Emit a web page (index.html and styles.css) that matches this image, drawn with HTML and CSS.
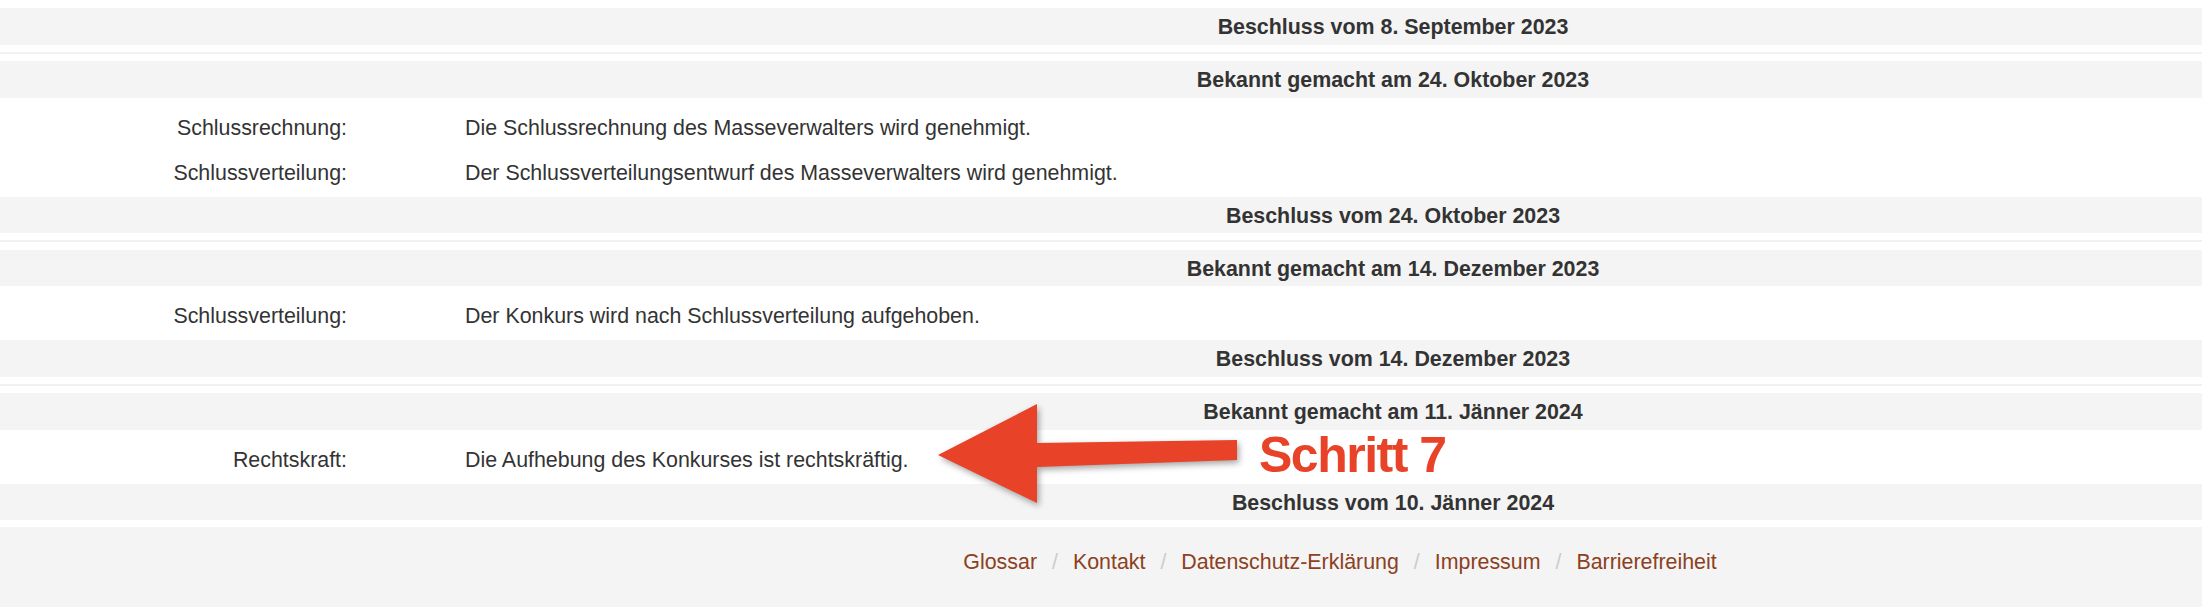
FILE: index.html
```html
<!DOCTYPE html>
<html lang="de">
<head>
    <meta charset="UTF-8">
    <meta name="viewport" content="width=device-width, initial-scale=1.0">
    <title>Ediktsdatei – Konkursverfahren</title>
    <link rel="stylesheet" href="styles.css">
</head>
<body>
    <div class="page">
        <div class="section">
            <div class="band">Beschluss vom 8. September 2023</div>
        </div>

        <div class="section">
            <div class="band">Bekannt gemacht am 24. Oktober 2023</div>
            <div class="rows">
                <div class="row">
                    <span class="label">Schlussrechnung:</span>
                    <span class="value">Die Schlussrechnung des Masseverwalters wird genehmigt.</span>
                </div>
                <div class="row">
                    <span class="label">Schlussverteilung:</span>
                    <span class="value">Der Schlussverteilungsentwurf des Masseverwalters wird genehmigt.</span>
                </div>
            </div>
            <div class="band">Beschluss vom 24. Oktober 2023</div>
        </div>

        <div class="section">
            <div class="band">Bekannt gemacht am 14. Dezember 2023</div>
            <div class="rows">
                <div class="row">
                    <span class="label">Schlussverteilung:</span>
                    <span class="value">Der Konkurs wird nach Schlussverteilung aufgehoben.</span>
                </div>
            </div>
            <div class="band">Beschluss vom 14. Dezember 2023</div>
        </div>

        <div class="section">
            <div class="band">Bekannt gemacht am 11. Jänner 2024</div>
            <div class="rows">
                <div class="row">
                    <span class="label">Rechtskraft:</span>
                    <span class="value">Die Aufhebung des Konkurses ist rechtskräftig.</span>
                </div>
            </div>
            <div class="band">Beschluss vom 10. Jänner 2024</div>
        </div>

        <div class="footer">
            <a href="#">Glossar</a>
            <span class="sep">/</span>
            <a href="#">Kontakt</a>
            <span class="sep">/</span>
            <a href="#">Datenschutz-Erklärung</a>
            <span class="sep">/</span>
            <a href="#">Impressum</a>
            <span class="sep">/</span>
            <a href="#">Barrierefreiheit</a>
        </div>

        <!-- Markierung -->
        <svg class="arrow" width="330" height="125" viewBox="0 0 330 125">
            <polygon points="18,60 117,9 117,48 317,45 317,65 117,72 117,108"/>
        </svg>
        <div class="step">Schritt 7</div>
    </div>
</body>
</html>
```

FILE: styles.css
```css
body {
    margin: 0;
    padding-top: 8px;
    font-family: "Liberation Sans", Arial, Helvetica, sans-serif;
    font-size: 21.4px;
    color: #333;
    background-color: #fff;
}
.page {
    position: relative;
}
.section {
    margin-bottom: 7px;
}
.section + .section {
    border-top: 2px solid #f1f1f1;
    padding-top: 7.5px;
}
.band {
    height: 36.5px;
    line-height: 39px;
    overflow: hidden;
    background-color: #f4f4f4;
    font-weight: bold;
    text-align: center;
    padding-left: 584px;
}
.rows {
    display: flex;
    flex-direction: column;
    gap: 5px;
    padding: 10px 0 4px;
}
.row {
    display: grid;
    grid-template-columns: 347px 1fr;
    column-gap: 118px;
    line-height: 40px;
}
.label {
    text-align: right;
}
.footer {
    background-color: #f4f4f4;
    height: 80px;
    box-sizing: border-box;
    padding: 22px 0 0 478px;
    text-align: center;
    line-height: 26px;
}
.footer a {
    color: #8c411e;
    text-decoration: none;
}
.footer .sep {
    color: #ccc;
    margin: 0 9px;
}
.arrow {
    position: absolute;
    left: 920px;
    top: 387px;
    filter: drop-shadow(2px 3px 3px rgba(0, 0, 0, 0.35));
}
.arrow polygon {
    fill: #e84228;
}
.step {
    position: absolute;
    left: 1259px;
    top: 422px;
    font-size: 50px;
    line-height: 50px;
    font-weight: bold;
    letter-spacing: -1.5px;
    color: #e84228;
}
```
